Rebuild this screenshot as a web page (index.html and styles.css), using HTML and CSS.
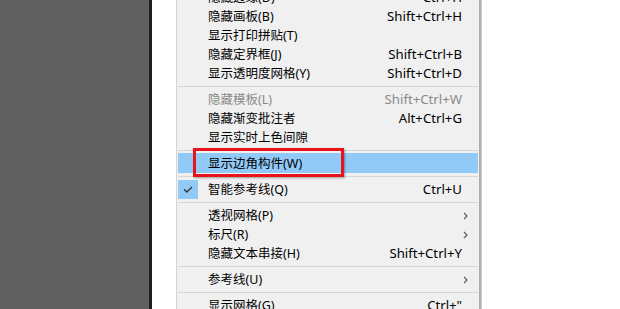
FILE: index.html
```html
<!DOCTYPE html>
<html lang="zh-CN">
  <head>
    <meta charset="UTF-8" />
    <meta name="viewport" content="width=device-width, initial-scale=1.0" />
    <title>视图菜单</title>
    <link rel="stylesheet" href="styles.css">
  </head>
  <body>
    <div class="screen">
      <div class="canvas-area"></div>
      <div class="ruler-strip"></div>
      <div class="menu">
        <ul class="menu-list">
          <li class="item"><span class="label">隐藏边缘(D)</span><span class="key">Ctrl+H</span></li>
          <li class="item"><span class="label">隐藏画板(B)</span><span class="key">Shift+Ctrl+H</span></li>
          <li class="item"><span class="label">显示打印拼贴(T)</span></li>
          <li class="item"><span class="label">隐藏定界框(J)</span><span class="key">Shift+Ctrl+B</span></li>
          <li class="item"><span class="label">显示透明度网格(Y)</span><span class="key">Shift+Ctrl+D</span></li>
          <li class="sep"></li>
          <li class="item disabled"><span class="label">隐藏模板(L)</span><span class="key">Shift+Ctrl+W</span></li>
          <li class="item"><span class="label">隐藏渐变批注者</span><span class="key">Alt+Ctrl+G</span></li>
          <li class="item"><span class="label">显示实时上色间隙</span></li>
          <li class="sep"></li>
          <li class="item active">
            <span class="label">显示边角构件(W)</span>
            <span class="mark-box"></span>
          </li>
          <li class="sep"></li>
          <li class="item checked">
            <span class="check">
              <svg width="10" height="7" viewBox="0 0 10 7"><path d="M1 3.2 L3.8 6 L9 1" fill="none" stroke="#333" stroke-width="1.3"/></svg>
            </span>
            <span class="label">智能参考线(Q)</span><span class="key">Ctrl+U</span>
          </li>
          <li class="sep"></li>
          <li class="item"><span class="label">透视网格(P)</span><span class="arrow"><svg width="5" height="8" viewBox="0 0 5 8"><path d="M1 1 L4 4 L1 7" fill="none" stroke="#555" stroke-width="1.1"/></svg></span></li>
          <li class="item"><span class="label">标尺(R)</span><span class="arrow"><svg width="5" height="8" viewBox="0 0 5 8"><path d="M1 1 L4 4 L1 7" fill="none" stroke="#555" stroke-width="1.1"/></svg></span></li>
          <li class="item"><span class="label">隐藏文本串接(H)</span><span class="key">Shift+Ctrl+Y</span></li>
          <li class="sep"></li>
          <li class="item"><span class="label">参考线(U)</span><span class="arrow"><svg width="5" height="8" viewBox="0 0 5 8"><path d="M1 1 L4 4 L1 7" fill="none" stroke="#555" stroke-width="1.1"/></svg></span></li>
          <li class="sep"></li>
          <li class="item"><span class="label">显示网格(G)</span><span class="key">Ctrl+"</span></li>
        </ul>
      </div>
      <div class="menu-shadow"></div>
      <div class="blank"></div>
    </div>
  </body>
</html>
```

FILE: styles.css
```css
* {
  margin: 0px;
  padding: 0px;
  box-sizing: border-box;
}
html,
body {
  width: 620px;
  height: 309px;
  overflow: hidden;
  background-color: #ffffff;
}
body {
  font-family: "Noto Sans", "Noto Sans CJK SC", sans-serif;
  font-size: 12.5px;
  color: #000000;
}
.screen {
  display: flex;
  height: 309px;
}
.canvas-area {
  width: 152px;
  flex-shrink: 0;
  background-color: #606060;
  border-right: 3px solid #1e1e1e;
}
.ruler-strip {
  width: 25px;
  flex-shrink: 0;
  background-color: #ffffff;
  border-right: 1px solid #d4d4d4;
}
.menu {
  width: 301px;
  flex-shrink: 0;
  background-color: #f0f0f0;
  padding-left: 1px;
}
.menu-shadow {
  width: 4px;
  flex-shrink: 0;
  background: linear-gradient(to right, #f4f4f4 0px, #f4f4f4 1px, #a8a8a8 1px, #b4b4b4 3px, #e4e4e4 4px);
}
.blank {
  flex: 1;
}
ul {
  list-style: none;
}
.menu-list {
  margin-top: -12px;
}
.item {
  position: relative;
  display: flex;
  align-items: center;
  height: 19px;
  padding-left: 30px;
  padding-right: 16px;
  line-height: 19px;
  white-space: nowrap;
}
.label {
  flex: 1;
}
.key {
  text-align: right;
  font-size: 13.2px;
}
.disabled {
  color: #8a8a8a;
}
.active {
  background-color: #91c9f7;
  height: 20px;
  margin-top: -1px;
}
.mark-box {
  position: absolute;
  left: 15px;
  top: -5px;
  width: 151px;
  height: 29px;
  border: 3px solid #e8141c;
  box-shadow: 1px 1px 2px rgba(0, 0, 0, 0.35);
}
.check {
  position: absolute;
  left: 0px;
  top: 0px;
  width: 20px;
  height: 19px;
  background-color: #91c9f7;
  display: flex;
  align-items: center;
  justify-content: center;
}
.arrow {
  display: flex;
  margin-right: -6px;
}
.sep {
  height: 7px;
  padding-top: 3px;
}
.sep::after {
  content: "";
  display: block;
  height: 1px;
  background-color: #d6d6d6;
}
```
